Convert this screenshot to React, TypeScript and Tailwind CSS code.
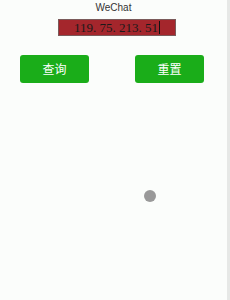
import React from 'react'

export default function App() {
	return (
		<div className='flex h-[300px] w-[230px] bg-[#fbfdfb]'>
			<div className='relative flex-1 flex flex-col items-center'>
				<div className='mt-[1px] text-[10px] leading-[14px] text-[#333] font-["Liberation_Sans",sans-serif]'>
					WeChat
				</div>
				<div className='mt-[4px] ml-[58px] self-start flex h-[17px] w-[118px] items-center justify-center border border-[#7a5a5a] bg-[#a4262c]'>
					<span className='text-[13px] leading-none text-[#1a1a1a] font-["Liberation_Serif",serif]'>
						119. 75. 213. 51
					</span>
					<span className='ml-[1px] h-[13px] w-[1px] bg-[#111]' />
				</div>
				<div className='mt-[19px] flex w-full justify-between pl-[20px] pr-[23px]'>
					<button className='flex h-[28px] w-[69px] items-center justify-center rounded-[3px] bg-[#1aad19] text-[12px] text-white font-["Noto_Sans_CJK_SC",sans-serif]'>
						查询
					</button>
					<button className='flex h-[28px] w-[69px] items-center justify-center rounded-[3px] bg-[#1aad19] text-[12px] text-white font-["Noto_Sans_CJK_SC",sans-serif]'>
						重置
					</button>
				</div>
				<div className='absolute left-[144px] top-[190px] h-[12px] w-[12px] rounded-full bg-[#999]' />
			</div>
			<div className='w-[3px] bg-[#e6e8e6]' />
		</div>
	)
}
